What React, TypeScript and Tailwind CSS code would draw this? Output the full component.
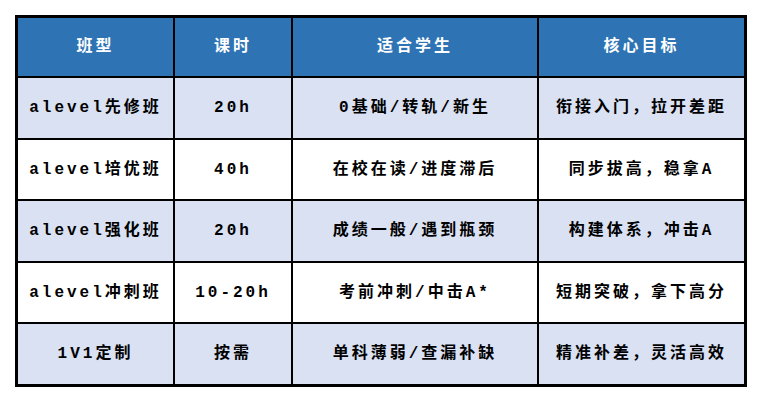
import React from 'react';

const rows = [
  ['alevel先修班', '20h', '0基础/转轨/新生', '衔接入门，拉开差距'],
  ['alevel培优班', '40h', '在校在读/进度滞后', '同步拔高，稳拿A'],
  ['alevel强化班', '20h', '成绩一般/遇到瓶颈', '构建体系，冲击A'],
  ['alevel冲刺班', '10-20h', '考前冲刺/中击A*', '短期突破，拿下高分'],
  ['1V1定制', '按需', '单科薄弱/查漏补缺', '精准补差，灵活高效'],
];

const rowHeights = ['h-[60px]', 'h-[59px]', 'h-[60px]', 'h-[59px]', 'h-[60px]'];

export default function App() {
  return (
    <div className="w-[762px] h-[402px] bg-white p-[15px]">
      <div className="w-[732px] border-[3px] border-black bg-black grid grid-cols-[155px_116px_244px_205px] gap-[2px] [font-family:'Liberation_Mono','Noto_Sans_CJK_SC',monospace] font-bold text-[16px] tracking-[3px]">
        {['班型', '课时', '适合学生', '核心目标'].map((h) => (
          <div key={h} className="h-[58px] bg-[#2e74b5] text-white flex items-center justify-center">
            {h}
          </div>
        ))}
        {rows.map((r, i) =>
          r.map((c, j) => (
            <div
              key={`${i}-${j}`}
              className={`${rowHeights[i]} ${i % 2 === 0 ? 'bg-[#d9e1f3]' : 'bg-white'} text-black flex items-center justify-center`}
            >
              {c}
            </div>
          ))
        )}
      </div>
    </div>
  );
}
